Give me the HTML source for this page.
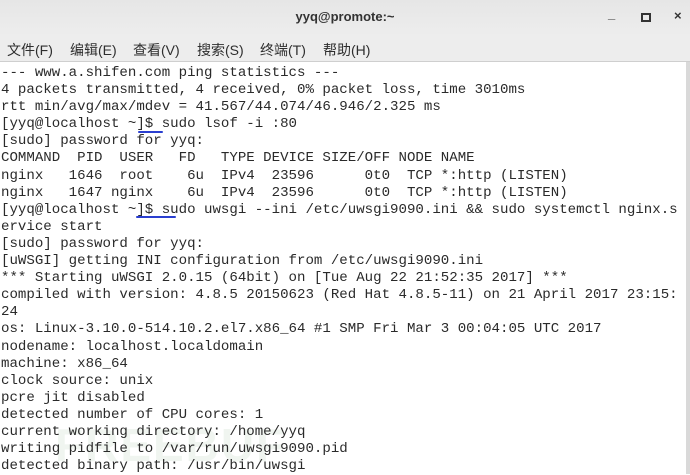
<!DOCTYPE html>
<html><head><meta charset="utf-8"><style>
*{margin:0;padding:0}
body{width:690px;height:474px;overflow:hidden;background:#fff;position:relative;font-family:"Liberation Sans","Noto Sans CJK SC",sans-serif}
.title{position:absolute;left:0;top:0;width:690px;height:36px;background:linear-gradient(#e6e6e6,#ededed);}
.title .t{position:absolute;left:0;width:690px;top:9px;text-align:center;font-size:13px;font-weight:bold;color:#333}
.ctl{position:absolute;top:8px;font-size:13px;color:#333;font-weight:bold}
.menu{position:absolute;left:0;top:36px;width:690px;height:25px;background:#ededed;border-bottom:1px solid #cfcfcf;font-size:14px;color:#2e2e2e}
.menu span{position:absolute;top:4px}
pre{position:absolute;left:1px;top:65px;font-family:"Liberation Mono","DejaVu Sans Mono",monospace;font-size:14.1px;line-height:17.1px;color:#2a2a2a;white-space:pre}
.sb{position:absolute;left:686px;top:62px;width:4px;height:412px;background:#d9d9d9}
.ul{position:absolute;height:2px;background:#2a3fd0;border-radius:1px}
.wm{position:absolute;left:55px;top:418px;font-size:46px;font-weight:bold;color:rgba(170,200,170,0.18);letter-spacing:2px}
</style></head><body>
<div class="title"><div class="t">yyq@promote:~</div>
<div class="ctl" style="left:608px;top:6px">_</div>
<div class="ctl" style="left:641px;width:6px;height:5px;border:2px solid #333;top:13px"></div>
<div class="ctl" style="left:674px">×</div></div>
<div class="menu"><span style="left:7px">文件(F)</span><span style="left:70px">编辑(E)</span><span style="left:133px">查看(V)</span><span style="left:197px">搜索(S)</span><span style="left:260px">终端(T)</span><span style="left:323px">帮助(H)</span></div>
<div class="wm">FREEBUF</div>
<pre>--- www.a.shifen.com ping statistics ---
4 packets transmitted, 4 received, 0% packet loss, time 3010ms
rtt min/avg/max/mdev = 41.567/44.074/46.946/2.325 ms
[yyq@localhost ~]$ sudo lsof -i :80
[sudo] password for yyq:
COMMAND  PID  USER   FD   TYPE DEVICE SIZE/OFF NODE NAME
nginx   1646  root    6u  IPv4  23596      0t0  TCP *:http (LISTEN)
nginx   1647 nginx    6u  IPv4  23596      0t0  TCP *:http (LISTEN)
[yyq@localhost ~]$ sudo uwsgi --ini /etc/uwsgi9090.ini &amp;&amp; sudo systemctl nginx.s
ervice start
[sudo] password for yyq:
[uWSGI] getting INI configuration from /etc/uwsgi9090.ini
*** Starting uWSGI 2.0.15 (64bit) on [Tue Aug 22 21:52:35 2017] ***
compiled with version: 4.8.5 20150623 (Red Hat 4.8.5-11) on 21 April 2017 23:15:
24
os: Linux-3.10.0-514.10.2.el7.x86_64 #1 SMP Fri Mar 3 00:04:05 UTC 2017
nodename: localhost.localdomain
machine: x86_64
clock source: unix
pcre jit disabled
detected number of CPU cores: 1
current working directory: /home/yyq
writing pidfile to /var/run/uwsgi9090.pid
detected binary path: /usr/bin/uwsgi</pre>
<div class="sb"></div>
<div class="ul" style="left:138px;top:131px;width:25px"></div>
<div class="ul" style="left:136px;top:216px;width:40px"></div>
</body></html>
